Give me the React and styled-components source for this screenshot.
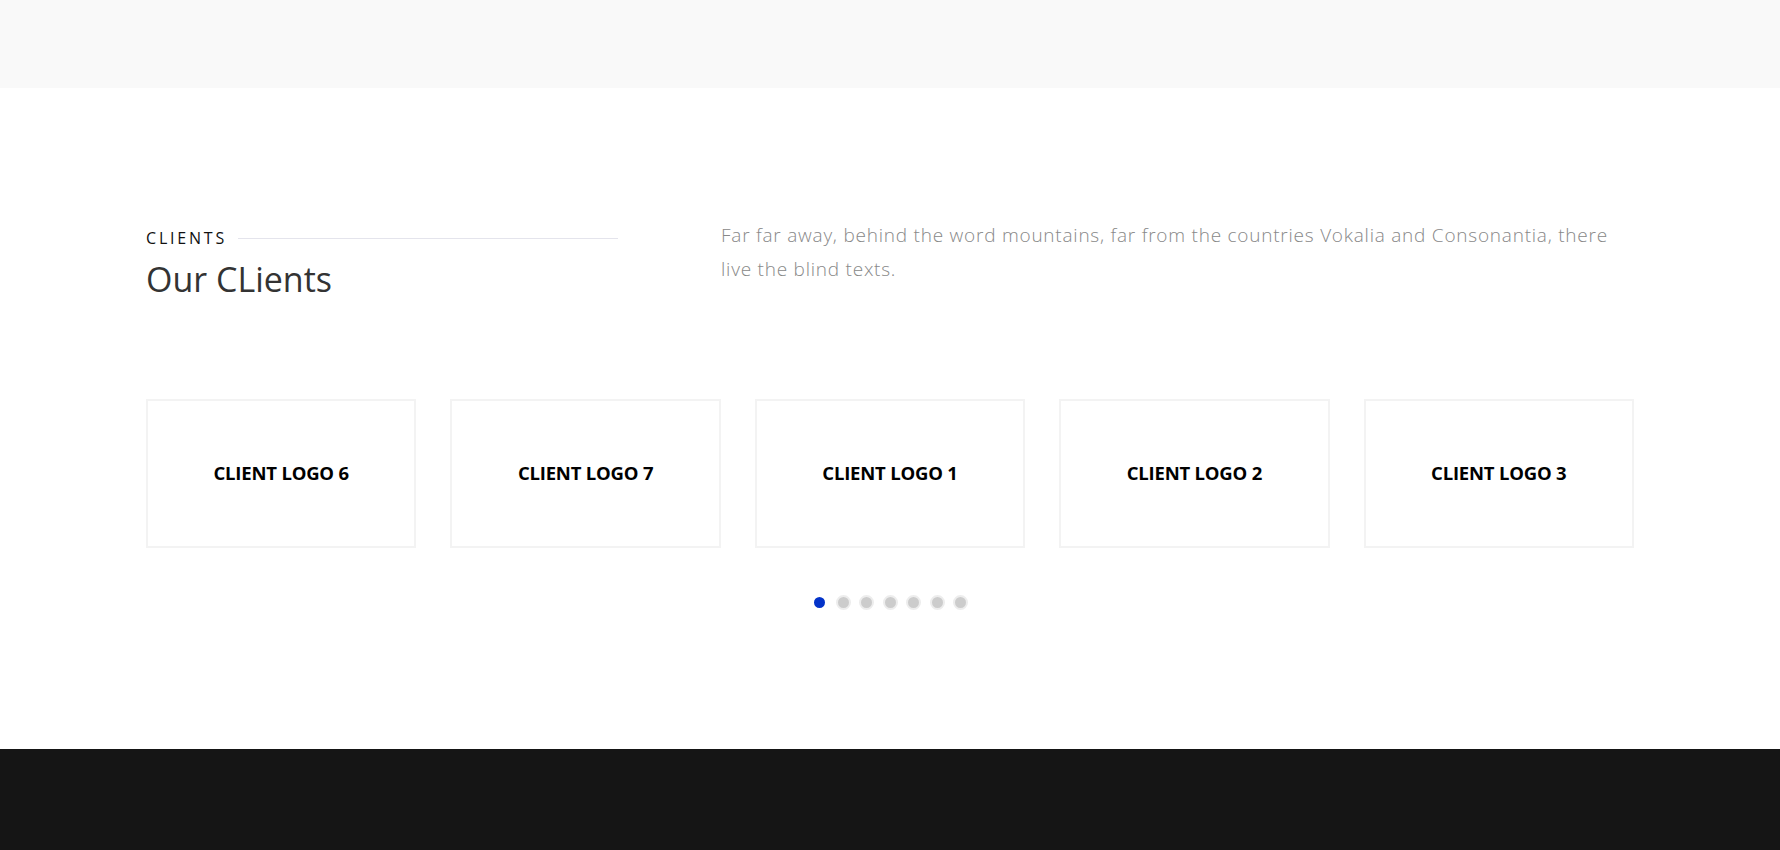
import React from "react";
import styled, { createGlobalStyle } from "styled-components";

const GlobalStyle = createGlobalStyle`
  * { box-sizing: border-box; }
  body {
    margin: 0;
    background: #ffffff;
    font-family: "Open Sans", "Noto Sans", sans-serif;
  }
`;

const TopBand = styled.div`
  height: 88px;
  background: #f9f9f9;
`;

const Section = styled.section`
  padding: 129px 0 139px;
  background: #ffffff;
`;

const Container = styled.div`
  max-width: 1488px;
  margin: 0 auto;
`;

const HeaderRow = styled.div`
  display: grid;
  grid-template-columns: 472px 1fr;
  column-gap: 103px;
  align-items: start;
`;

const HeadingBlock = styled.div`
  display: flex;
  flex-direction: column;
  padding-top: 11px;
`;

const Eyebrow = styled.div`
  display: flex;
  align-items: center;
  gap: 11px;
`;

const EyebrowText = styled.span`
  font-size: 16px;
  line-height: 20px;
  letter-spacing: 2.8px;
  color: #111111;
  text-transform: uppercase;
`;

const EyebrowLine = styled.span`
  flex: 1;
  height: 1px;
  background: #e4e4ec;
`;

const Title = styled.h2`
  margin: 10px 0 0;
  font-size: 34px;
  line-height: 42px;
  font-weight: 500;
  color: #333333;
`;

const Lead = styled.p`
  margin: 1px 0 0;
  font-size: 19px;
  line-height: 34px;
  font-weight: 300;
  letter-spacing: 0.77px;
  color: #888888;
`;

const LogoGrid = styled.div`
  display: grid;
  grid-template-columns: repeat(5, 1fr);
  gap: 34px;
  margin-top: 99px;
`;

const LogoCard = styled.div`
  height: 149px;
  display: flex;
  align-items: center;
  justify-content: center;
  border: 2px solid #f3f3f3;
  background: #ffffff;
`;

const LogoText = styled.span`
  font-size: 18.5px;
  line-height: 24px;
  font-weight: 700;
  color: #000000;
  letter-spacing: -0.2px;
  margin-top: -1px;
`;

const Dots = styled.div`
  display: flex;
  justify-content: center;
  align-items: center;
  gap: 8.5px;
  margin-top: 47px;
`;

const Dot = styled.span`
  width: 15px;
  height: 15px;
  border-radius: 50%;
  background: ${(p) => (p.$active ? "#0333c9" : "#cccccc")};
  border: 2px solid ${(p) => (p.$active ? "#ffffff" : "#ededed")};
`;

const Footer = styled.footer`
  height: 300px;
  background: #151515;
`;

const logos = ["CLIENT LOGO 6", "CLIENT LOGO 7", "CLIENT LOGO 1", "CLIENT LOGO 2", "CLIENT LOGO 3"];

export default function App() {
  return (
    <>
      <GlobalStyle />
      <TopBand />
      <Section>
        <Container>
          <HeaderRow>
            <HeadingBlock>
              <Eyebrow>
                <EyebrowText>Clients</EyebrowText>
                <EyebrowLine />
              </Eyebrow>
              <Title>Our CLients</Title>
            </HeadingBlock>
            <Lead>
              Far far away, behind the word mountains, far from the countries Vokalia and Consonantia, there live the blind texts.
            </Lead>
          </HeaderRow>
          <LogoGrid>
            {logos.map((l) => (
              <LogoCard key={l}>
                <LogoText>{l}</LogoText>
              </LogoCard>
            ))}
          </LogoGrid>
          <Dots>
            {[0, 1, 2, 3, 4, 5, 6].map((i) => (
              <Dot key={i} $active={i === 0} />
            ))}
          </Dots>
        </Container>
      </Section>
      <Footer />
    </>
  );
}
